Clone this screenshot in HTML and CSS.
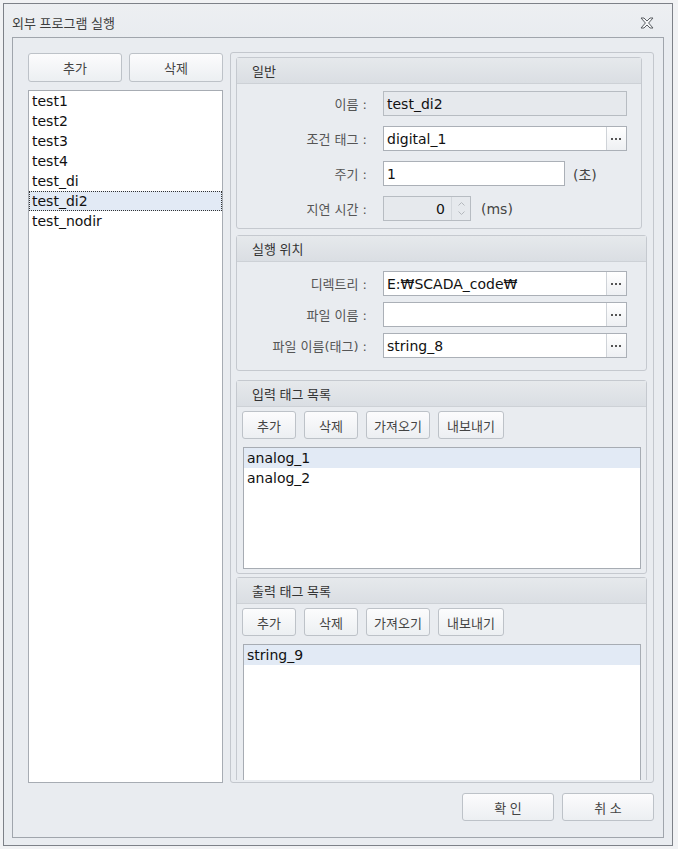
FILE: index.html
```html
<!DOCTYPE html>
<html lang="ko">
<head>
  <meta charset="UTF-8">
  <title>외부 프로그램 실행</title>
  <link rel="stylesheet" href="styles.css">
</head>
<body>
  <div class="window">
    <div class="titlebar">
      <span class="title">외부 프로그램 실행</span>
      <svg class="close" width="14" height="12" viewBox="0 0 14 12">
        <polygon points="1,1 4,1 7,4 10,1 13,1 8.6,6 13,11 10,11 7,8 4,11 1,11 5.4,6" fill="#f6f7f8" stroke="#5a5e63" stroke-width="1" stroke-linejoin="round"/>
      </svg>
    </div>

    <div class="client">
      <div class="main">
        <!-- 프로그램 목록 -->
        <div class="left">
          <div class="btn-row">
            <button class="btn">추가</button>
            <button class="btn">삭제</button>
          </div>
          <ul class="list program-list">
            <li class="item">test1</li>
            <li class="item">test2</li>
            <li class="item">test3</li>
            <li class="item">test4</li>
            <li class="item">test_di</li>
            <li class="item selected focus">test_di2</li>
            <li class="item">test_nodir</li>
          </ul>
        </div>

        <div class="group">
          <div class="scroll">
            <!-- 일반 -->
            <div class="section general">
              <div class="section-head">일반</div>
              <div class="form">
                <div class="form-row">
                  <span class="label">이름 :</span>
                  <div class="field disabled"><span class="value">test_di2</span></div>
                </div>
                <div class="form-row">
                  <span class="label">조건 태그 :</span>
                  <div class="field"><span class="value">digital_1</span><span class="browse"></span></div>
                </div>
                <div class="form-row">
                  <span class="label">주기 :</span>
                  <div class="field short"><span class="value">1</span></div>
                  <span class="suffix">(초)</span>
                </div>
                <div class="form-row">
                  <span class="label">지연 시간 :</span>
                  <div class="field spin disabled">
                    <span class="value num">0</span>
                    <span class="spin-btns">
                      <svg width="7" height="4" viewBox="0 0 7 4"><polyline points="0.5,3.5 3.5,0.5 6.5,3.5" fill="none" stroke="#b4b8bd"/></svg>
                      <svg width="7" height="4" viewBox="0 0 7 4"><polyline points="0.5,0.5 3.5,3.5 6.5,0.5" fill="none" stroke="#b4b8bd"/></svg>
                    </span>
                  </div>
                  <span class="suffix ms">(ms)</span>
                </div>
              </div>
            </div>

            <!-- 실행 위치 -->
            <div class="section location">
              <div class="section-head">실행 위치</div>
              <div class="form">
                <div class="form-row">
                  <span class="label">디렉트리 :</span>
                  <div class="field"><span class="value">E:₩SCADA_code₩</span><span class="browse"></span></div>
                </div>
                <div class="form-row">
                  <span class="label">파일 이름 :</span>
                  <div class="field"><span class="value"></span><span class="browse"></span></div>
                </div>
                <div class="form-row">
                  <span class="label">파일 이름(태그) :</span>
                  <div class="field"><span class="value">string_8</span><span class="browse"></span></div>
                </div>
              </div>
            </div>

            <!-- 입력 태그 목록 -->
            <div class="section tags input-tags">
              <div class="section-head">입력 태그 목록</div>
              <div class="tag-body">
                <div class="tag-btns">
                  <button class="btn w54">추가</button>
                  <button class="btn w54">삭제</button>
                  <button class="btn w64">가져오기</button>
                  <button class="btn w66">내보내기</button>
                </div>
                <ul class="list tag-list">
                  <li class="item selected">analog_1</li>
                  <li class="item">analog_2</li>
                </ul>
              </div>
            </div>

            <!-- 출력 태그 목록 -->
            <div class="section tags output-tags">
              <div class="section-head">출력 태그 목록</div>
              <div class="tag-body">
                <div class="tag-btns">
                  <button class="btn w54">추가</button>
                  <button class="btn w54">삭제</button>
                  <button class="btn w64">가져오기</button>
                  <button class="btn w66">내보내기</button>
                </div>
                <ul class="list tag-list tall">
                  <li class="item selected">string_9</li>
                </ul>
              </div>
            </div>
          </div>
        </div>
      </div>

      <div class="footer">
        <button class="btn">확 인</button>
        <button class="btn">취 소</button>
      </div>
    </div>
  </div>
</body>
</html>
```

FILE: styles.css
```css
* {
  box-sizing: border-box;
}

body {
  margin: 0;
  background: #f1f2f4;
  font-family: "DejaVu Sans", "Noto Sans CJK KR", sans-serif;
  font-size: 14px;
  color: #111;
}

.window {
  margin: 3px 0 0 3px;
  width: 670px;
  height: 843px;
  border: 1px solid #7d8188;
  background: #e9ecf0;
  display: flex;
  flex-direction: column;
}

.titlebar {
  height: 33px;
  flex: none;
  display: flex;
  align-items: center;
  justify-content: space-between;
  padding: 4px 18px 0 8px;
  background: linear-gradient(#edeff2, #e9ecf0);
}

.title {
  font-family: "Noto Sans CJK KR", sans-serif;
  font-size: 13px;
  color: #3d3d3d;
}

.client {
  flex: none;
  height: 801px;
  margin: 0 8px;
  border: 1px solid #a0a5ac;
  padding: 14px 9px 16px 15px;
  display: flex;
  flex-direction: column;
}

.main {
  height: 731px;
  flex: none;
  display: flex;
  gap: 7px;
}

.left {
  width: 195px;
  padding-top: 1px;
  display: flex;
  flex-direction: column;
}

.btn-row {
  display: flex;
  gap: 7px;
}

.btn {
  height: 29px;
  padding: 0;
  border: 1px solid #bdc2c8;
  border-radius: 3px;
  background: linear-gradient(#fcfcfd, #eceff2);
  font-family: "Noto Sans CJK KR", sans-serif;
  font-size: 13px;
  color: #444;
}

.left .btn {
  width: 94px;
}

.list {
  margin: 0;
  padding: 0;
  list-style: none;
  background: #fff;
  border: 1px solid #a7acb3;
}

.program-list {
  margin-top: 8px;
  flex: 1;
}

.item {
  height: 20px;
  line-height: 20px;
  padding-left: 3px;
  white-space: nowrap;
}

.item.selected {
  background: #e2eaf5;
}

.item.focus {
  outline: 1px dotted #333;
  outline-offset: -1px;
}

.group {
  width: 424px;
  border: 1px solid #c3c7cd;
  border-radius: 3px;
  padding: 4px 6px 2px 5px;
  display: flex;
  flex-direction: column;
}

.scroll {
  flex: 1;
  overflow: hidden;
  display: flex;
  flex-direction: column;
}

.section {
  flex: none;
  border: 1px solid #c5c9cf;
  border-radius: 3px;
}

.section-head {
  height: 26px;
  line-height: 25px;
  padding-left: 15px;
  background: linear-gradient(#e6e9ec, #dadee3);
  border-bottom: 1px solid #cdd1d6;
  font-family: "Noto Sans CJK KR", sans-serif;
  font-size: 13px;
  color: #333;
}

.general {
  margin-right: 5px;
}

.location {
  margin-top: 6px;
}

.input-tags {
  margin-top: 9px;
}

.output-tags {
  margin-top: 3px;
}

.form {
  display: flex;
  flex-direction: column;
  gap: 10px;
  padding: 7px 0 7px;
}

.location .form {
  gap: 6px;
  padding: 9px 0 12px;
}

.form-row {
  height: 25px;
  display: flex;
  align-items: center;
}

.label {
  width: 130px;
  margin-right: 16px;
  text-align: right;
  font-size: 13px;
  color: #555;
  white-space: nowrap;
}

.field {
  width: 244px;
  height: 25px;
  border: 1px solid #abb0b7;
  background: #fff;
  display: flex;
  align-items: center;
}

.field.short {
  width: 182px;
}

.field.disabled {
  background: #e6e9ed;
  border-color: #b7bcc2;
}

.value {
  flex: 1;
  padding-left: 3px;
  white-space: nowrap;
}

.value.num {
  text-align: right;
  padding-right: 6px;
}

.browse {
  width: 20px;
  height: 100%;
  border-left: 1px solid #cfd3d8;
  background: linear-gradient(#ffffff, #eef0f3);
  position: relative;
}

.browse::after {
  content: "";
  position: absolute;
  left: 8px;
  top: 11px;
  width: 2px;
  height: 2px;
  background: #555;
  box-shadow: -4px 0 #555, 4px 0 #555;
}

.field.spin {
  width: 88px;
}

.spin-btns {
  width: 19px;
  height: 100%;
  border-left: 1px solid #d3d7dc;
  display: flex;
  flex-direction: column;
  align-items: center;
  justify-content: space-around;
  padding: 3px 0;
}

.suffix {
  margin-left: 8px;
  color: #444;
}

.suffix.ms {
  margin-left: 10px;
}

.tag-body {
  padding: 4px 5px 4px 5px;
}

.tag-btns {
  display: flex;
  gap: 8px;
}

.tag-btns .btn {
  height: 28px;
}

.w54 { width: 54px; }
.w64 { width: 64px; }
.w66 { width: 66px; }

.tag-list {
  margin: 8px 0 0 1px;
  height: 122px;
}

.tag-list.tall {
  height: 200px;
}

.footer {
  margin-top: 10px;
  display: flex;
  justify-content: flex-end;
  gap: 8px;
}

.footer .btn {
  width: 92px;
  height: 28px;
}
```
